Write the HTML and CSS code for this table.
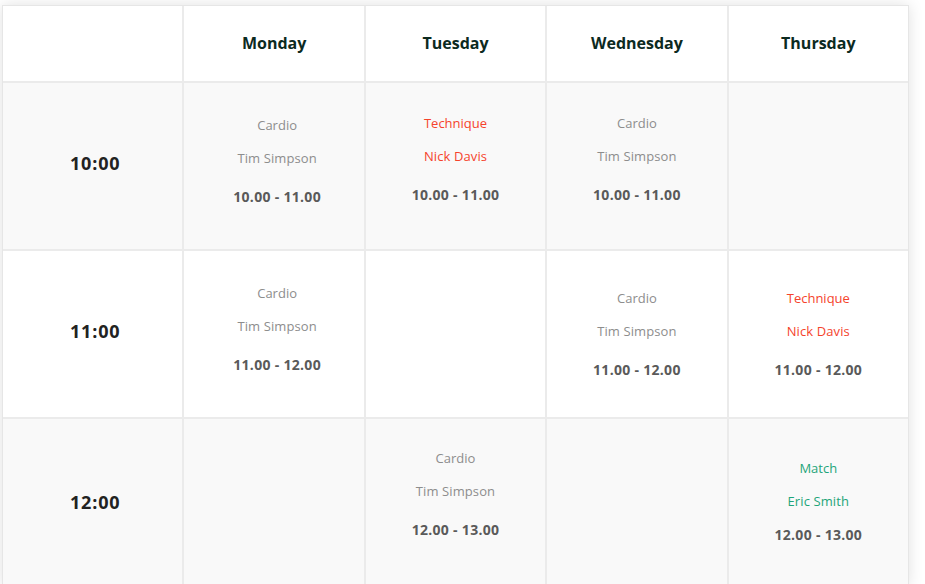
FILE: index.html
```html
<!DOCTYPE html>
<html lang="en">
<head>
<meta charset="utf-8">
<title>Schedule</title>
<link rel="stylesheet" href="styles.css">
</head>
<body>
<div class="schedule">
  <div class="cell head"></div>
  <div class="cell head">Monday</div>
  <div class="cell head">Tuesday</div>
  <div class="cell head">Wednesday</div>
  <div class="cell head">Thursday</div>

  <div class="cell hour shade">10:00</div>
  <div class="cell slot shade pad-32 mon"><span class="title">Cardio</span><span class="coach">Tim Simpson</span><span class="time">10.00 - 11.00</span></div>
  <div class="cell slot shade pad-30 red"><span class="title">Technique</span><span class="coach">Nick Davis</span><span class="time">10.00 - 11.00</span></div>
  <div class="cell slot shade pad-30"><span class="title">Cardio</span><span class="coach">Tim Simpson</span><span class="time">10.00 - 11.00</span></div>
  <div class="cell slot shade"></div>

  <div class="cell hour">11:00</div>
  <div class="cell slot pad-32 mon"><span class="title">Cardio</span><span class="coach">Tim Simpson</span><span class="time">11.00 - 12.00</span></div>
  <div class="cell slot"></div>
  <div class="cell slot pad-37"><span class="title">Cardio</span><span class="coach">Tim Simpson</span><span class="time">11.00 - 12.00</span></div>
  <div class="cell slot pad-37 red"><span class="title">Technique</span><span class="coach">Nick Davis</span><span class="time">11.00 - 12.00</span></div>

  <div class="cell hour shade last">12:00</div>
  <div class="cell slot shade"></div>
  <div class="cell slot shade pad-29"><span class="title">Cardio</span><span class="coach">Tim Simpson</span><span class="time">12.00 - 13.00</span></div>
  <div class="cell slot shade"></div>
  <div class="cell slot shade pad-39 green tight"><span class="title">Match</span><span class="coach">Eric Smith</span><span class="time">12.00 - 13.00</span></div>
</div>
</body>
</html>
```
FILE: styles.css
```css
html, body {
  margin: 0;
  padding: 0;
  background: #ffffff;
  overflow: hidden;
}
body {
  padding: 5px 0 0 2px;
  font-family: "Open Sans", "Noto Sans", sans-serif;
}
.schedule {
  width: 905px;
  display: grid;
  grid-template-columns: repeat(5, 1fr);
  grid-template-rows: 75px repeat(3, 166px);
  gap: 2px;
  background: #ebebeb;
  border: 1px solid #e6e6e6;
  box-shadow: 0 0 14px rgba(0, 0, 0, 0.12);
}
.cell {
  background: #ffffff;
}
.cell.shade {
  background: #f9f9f9;
}
.head {
  display: flex;
  align-items: center;
  justify-content: center;
  padding-bottom: 2px;
  box-sizing: border-box;
  font-size: 16px;
  font-weight: 700;
  color: #0c2a1f;
}
.hour {
  display: flex;
  align-items: center;
  justify-content: center;
  padding: 0 0 6px 5px;
  box-sizing: border-box;
  font-size: 18px;
  font-weight: 700;
  letter-spacing: 0.8px;
  color: #222222;
}
.hour.last {
  padding-bottom: 0;
}
.slot {
  display: flex;
  flex-direction: column;
  align-items: center;
  box-sizing: border-box;
  font-size: 13px;
  color: #8d8d8d;
  font-weight: 400;
}
.slot.mon {
  padding-left: 6px;
}
.slot span {
  line-height: 20px;
}
.slot .coach {
  margin-top: 13px;
  letter-spacing: 0.1px;
}
.slot .time {
  margin-top: 19px;
  font-size: 14px;
  font-weight: 700;
  letter-spacing: 0.3px;
  color: #5a5a5a;
}
.slot.tight .time {
  margin-top: 14px;
}
.red .title, .red .coach { color: #f5432c; }
.green .title, .green .coach { color: #1fa57a; }
.pad-29 { padding-top: 29px; }
.pad-30 { padding-top: 30px; }
.pad-32 { padding-top: 32px; }
.pad-37 { padding-top: 37px; }
.pad-39 { padding-top: 39px; }
```
